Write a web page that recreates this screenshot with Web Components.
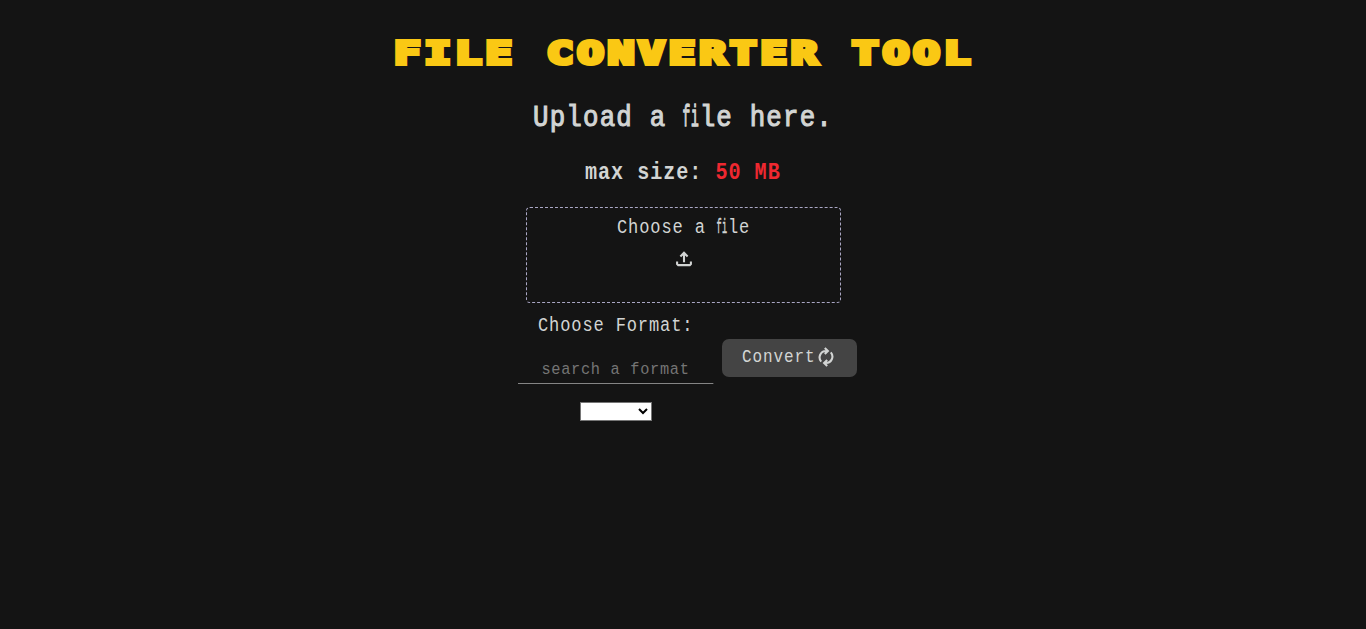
<!DOCTYPE html>
<html lang="en">
<head>
<meta charset="utf-8">
<title>File Converter Tool</title>
<style>
html,body{margin:0;background:#141414;color:#d2d4d3;font-family:"Liberation Mono","DejaVu Sans Mono",monospace}
</style>
</head>
<body>
<converter-app></converter-app>
<script>
const define=(name,html)=>customElements.define(name,class extends HTMLElement{
  constructor(){super();this.attachShadow({mode:'open'}).innerHTML=html}
});

define('page-title',`<style>
:host{display:block;height:56px;width:580px;color:#fac814}
h1{margin:0 0 0 1px;width:413px;font:bold 31.5px/56px "DejaVu Sans Mono",monospace;letter-spacing:2.85px;white-space:pre;-webkit-text-stroke:4px #fac814;stroke-linejoin:round;transform:scaleX(1.4);transform-origin:0 0}
</style><h1><slot></slot></h1>`);

/* One line of monospaced text: --size is the glyph size, --cell the advance,
   --squeeze the glyph width factor. The letters f+i share one cell. */
customElements.define('mono-line',class extends HTMLElement{
  constructor(){
    super();
    const raw=this.getAttribute('text');
    const cells=raw.replace('fi','x').length+this.textContent.length;
    const text=raw.replace('fi','<i>fi</i>');
    this.attachShadow({mode:'open'}).innerHTML=`<style>
:host{display:block;--inner:calc(var(--cell) / var(--squeeze,.88));width:calc(${cells} * var(--cell));white-space:pre;font-size:var(--size);letter-spacing:calc(var(--inner) - .6001 * var(--size))}
div{width:max-content;transform:scaleX(var(--squeeze,.88));transform-origin:0 0}
i{font-style:normal;display:inline-block;width:calc(2 * var(--inner));margin-right:calc(-1 * var(--inner));transform:scaleX(.5);transform-origin:0 0;-webkit-text-stroke:var(--fi,.5px) currentColor}
</style><div>${text}<slot></slot></div>`;
  }
});

define('upload-icon',`<style>:host{display:block;width:16px;height:16px}svg{display:block}</style>
<svg width="16" height="16" viewBox="0 0 16 16" fill="none" stroke="currentColor" stroke-width="2.1"><path d="M1.1 10.5V13L2.2 14.1H13.8L14.9 13V10.5M8 11.2V2M4.4 5.4L8 1.8L11.6 5.4"/></svg>`);

define('sync-icon',`<style>:host{display:block;width:16px;height:20px}svg{display:block}</style>
<svg width="16" height="20" viewBox="0 0 16 20" fill="none" stroke="currentColor" stroke-width="2.1"><path d="M3.2 14.6A6.4 6.4 0 0 1 8 4H9.6M6.8 1L9.9 4L6.8 7M12.8 5.4A6.4 6.4 0 0 1 8 16H6.4M9.2 13L6.1 16L9.2 19"/></svg>`);

define('drop-zone',`<style>
:host{box-sizing:border-box;display:flex;flex-direction:column;align-items:center;width:315px;height:96px;border:1px dashed #a9a6c4;border-radius:4px}
mono-line{--size:19.4px;--cell:11.1px;height:24px;line-height:24px;margin-top:8px}
upload-icon{margin:11px 0 0 0}
</style><mono-line text="Choose a file"></mono-line><upload-icon></upload-icon>`);

define('format-picker',`<style>
:host{display:flex;flex-direction:column;align-items:center;width:195px}
mono-line{--size:19.4px;--cell:11.1px;height:24px;line-height:24px;margin-top:1px}
.field{width:195px;height:30px;margin-top:16px}
input{display:block;box-sizing:border-box;width:221.6px;height:30px;margin:0;padding:1px 0 0;border:0;border-bottom:1px solid #858585;background:none;text-align:center;color:inherit;font:17.4px/27px "Liberation Mono",monospace;letter-spacing:.79px;outline:0;transform:scaleX(.88);transform-origin:0 0}
input::placeholder{color:#757575;opacity:1}
select{box-sizing:border-box;width:72px;height:19px;margin:18px 0 0;padding:0;background:#fff;border:1px solid #767676;border-radius:0;font:13.333px Arial,"Liberation Sans",sans-serif;color:#000}
</style><mono-line text="Choose Format:"></mono-line>
<div class="field"><input placeholder="search a format"></div><select aria-label="format"><option></option></select>`);

define('convert-button',`<style>
:host{display:block}
button{box-sizing:border-box;display:flex;align-items:center;width:135px;height:38px;margin:0;padding:0 0 0 19.5px;border:0;border-radius:7px;background:#444;color:#d2d4d3;font:inherit}
mono-line{--size:18.2px;--cell:10.5px;line-height:24px;height:24px;margin-top:-2px}
sync-icon{margin:-2px 0 0 3px}
</style><button><mono-line text="Convert"></mono-line><sync-icon></sync-icon></button>`);

define('converter-app',`<style>
:host{display:flex;flex-direction:column;align-items:center;padding-top:25px}
.h2{--size:29.3px;--cell:16.67px;--fi:1.4px;height:40px;line-height:40px;margin-top:18px;-webkit-text-stroke:1.1px currentColor}
.h3{--size:23.4px;--cell:13.05px;--squeeze:.86;height:32px;line-height:32px;margin-top:18px;font-weight:bold}
.h3 span{color:#ee2830}
drop-zone{margin-top:18px;margin-left:1px}
.row{display:flex;gap:9px;width:339px;margin:10px 0 0 9px}
convert-button{margin-top:26px}
</style>
<page-title>FILE CONVERTER TOOL</page-title>
<mono-line class="h2" text="Upload a file here."></mono-line>
<mono-line class="h3" text="max size: "><span>50 MB</span></mono-line>
<drop-zone></drop-zone>
<div class="row"><format-picker></format-picker><convert-button></convert-button></div>`);
</script>
</body>
</html>
